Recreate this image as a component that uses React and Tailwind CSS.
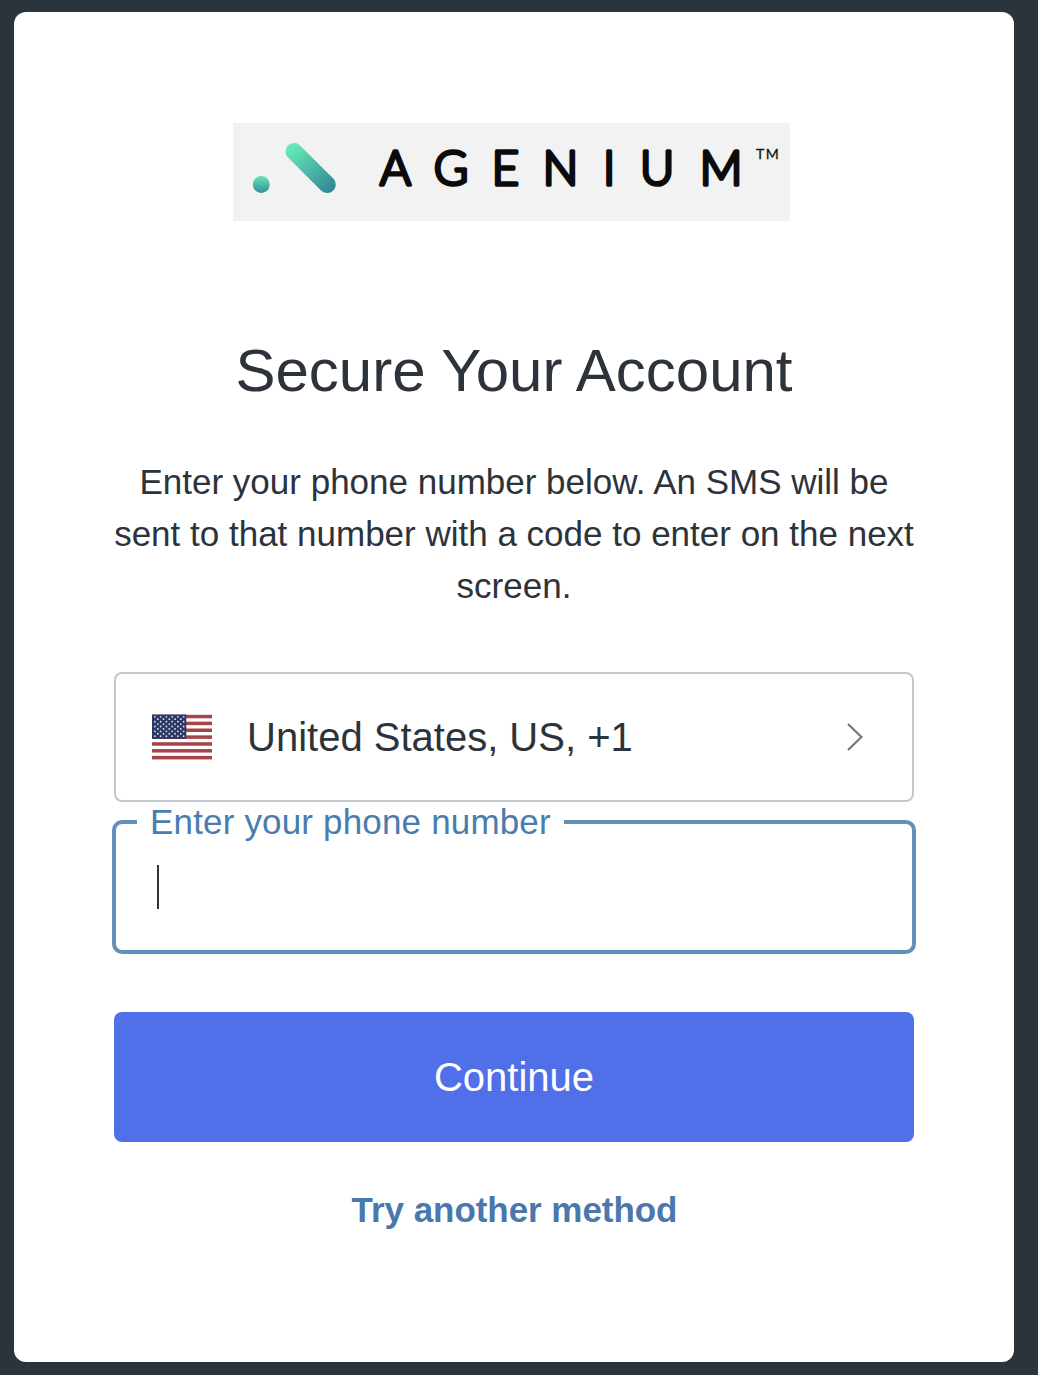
import { useState } from "react";

const letters = [
  ["A", 162.3], ["G", 218], ["E", 272.3], ["N", 327.5], ["I", 376], ["U", 424], ["M", 488],
];

function Logo() {
  return (
    <svg width="557" height="98" viewBox="0 0 557 98" className="mr-[5px] block bg-[#f2f2f2]">
      <defs>
        <linearGradient id="dot" x1="0" y1="0" x2="0" y2="1">
          <stop offset="0.1" stopColor="#5fddb2" />
          <stop offset="1" stopColor="#348e98" />
        </linearGradient>
        <linearGradient id="bar" gradientUnits="userSpaceOnUse" x1="57" y1="24" x2="98" y2="66">
          <stop offset="0" stopColor="#68e9b9" />
          <stop offset="1" stopColor="#328b96" />
        </linearGradient>
      </defs>
      <circle cx="28.3" cy="61.6" r="8.5" fill="url(#dot)" />
      <path d="M61 28.5 L94.3 61.6" stroke="url(#bar)" strokeWidth="17" strokeLinecap="round" />
      <g fill="#0b0b0b" stroke="#0b0b0b" strokeWidth="3.6" strokeLinejoin="round" textAnchor="middle" className="font-['Lato',sans-serif] text-[47px] font-light">
        {letters.map(([ch, x]) => (
          <text key={ch} x={x} y="62">{ch}</text>
        ))}
      </g>
      <text x="523" y="35.5" fill="#111" stroke="#111" strokeWidth="0.3" letterSpacing="1.6" className="font-['Lato',sans-serif] text-[14px]">TM</text>
    </svg>
  );
}

function Flag() {
  const stars = [];
  for (let r = 0; r < 9; r++) {
    const n = r % 2 ? 5 : 6;
    for (let c = 0; c < n; c++) {
      stars.push(<circle key={`${r}-${c}`} cx={(r % 2 ? 5.8 : 2.9) + c * 5.75} cy={2.8 + r * 2.42} r="0.9" />);
    }
  }
  return (
    <svg width="60" height="46" viewBox="0 0 60 46" className="block">
      <rect width="60" height="46" fill="#fff" />
      {[0, 1, 2, 3, 4, 5, 6].map((i) => (
        <rect key={i} y={0.8 + i * 6.85} width="60" height="3.5" fill="#a84347" />
      ))}
      <rect y="0.5" width="34.3" height="24.3" fill="#2b3866" />
      <g fill="#dfe3ee">{stars}</g>
    </svg>
  );
}

export default function App() {
  const [phone, setPhone] = useState("");

  return (
    <div className="h-[1375px] bg-[#2b343b] pt-3 pl-[14px] font-['Liberation_Sans',Arial,sans-serif] text-[#2d333a]">
      <main className="flex h-[1350px] w-[1000px] flex-col items-center rounded-xl bg-white px-[100px] pt-[111px]">
        <Logo />
        <h1 className="mt-[114px] text-[60px] leading-[72px]">Secure Your Account</h1>
        <p className="mt-[49px] w-[810px] text-center text-[35px] leading-[52px]">
          Enter your phone number below. An SMS will be
          <br />
          sent to that number with a code to enter on the next
          <br />
          screen.
        </p>

        <button className="mt-[60px] flex h-[130px] w-full items-center rounded-lg border-2 border-[#c2c8d0] pr-[49px] pl-9 text-[40px]">
          <Flag />
          <span className="ml-[35px] flex-1 text-left">United States, US, +1</span>
          <svg width="16" height="28" viewBox="0 0 16 28" fill="none" stroke="#6f7780" strokeWidth="2.2">
            <path d="M1 1 L14.5 14 L1 27" />
          </svg>
        </button>

        <div className="relative mt-[18px] h-[134px] w-[804px] rounded-[10px] border-4 border-[#6290b8]">
          <label htmlFor="phone" className="absolute -top-[20px] left-[21px] bg-white px-[13px] text-[35px] leading-[36px] tracking-[0.17px] whitespace-nowrap text-[#4a7dae]">
            Enter your phone number
          </label>
          <input
            id="phone"
            type="tel"
            value={phone}
            onChange={(e) => setPhone(e.target.value)}
            className="h-full w-full bg-transparent px-10 text-[40px] caret-[#2d333a] outline-none"
          />
          {!phone && <span className="absolute top-[41px] left-[41px] h-11 w-0.5 bg-[#2d333a]" />}
        </div>

        <button className="mt-[58px] h-[130px] w-full rounded-lg bg-[#4f70e8] text-[40px] text-white">Continue</button>
        <a href="#" className="mt-[42px] ml-px text-[35px] leading-[52px] font-bold tracking-[-0.05px] text-[#4a78ad]">Try another method</a>
      </main>
    </div>
  );
}
